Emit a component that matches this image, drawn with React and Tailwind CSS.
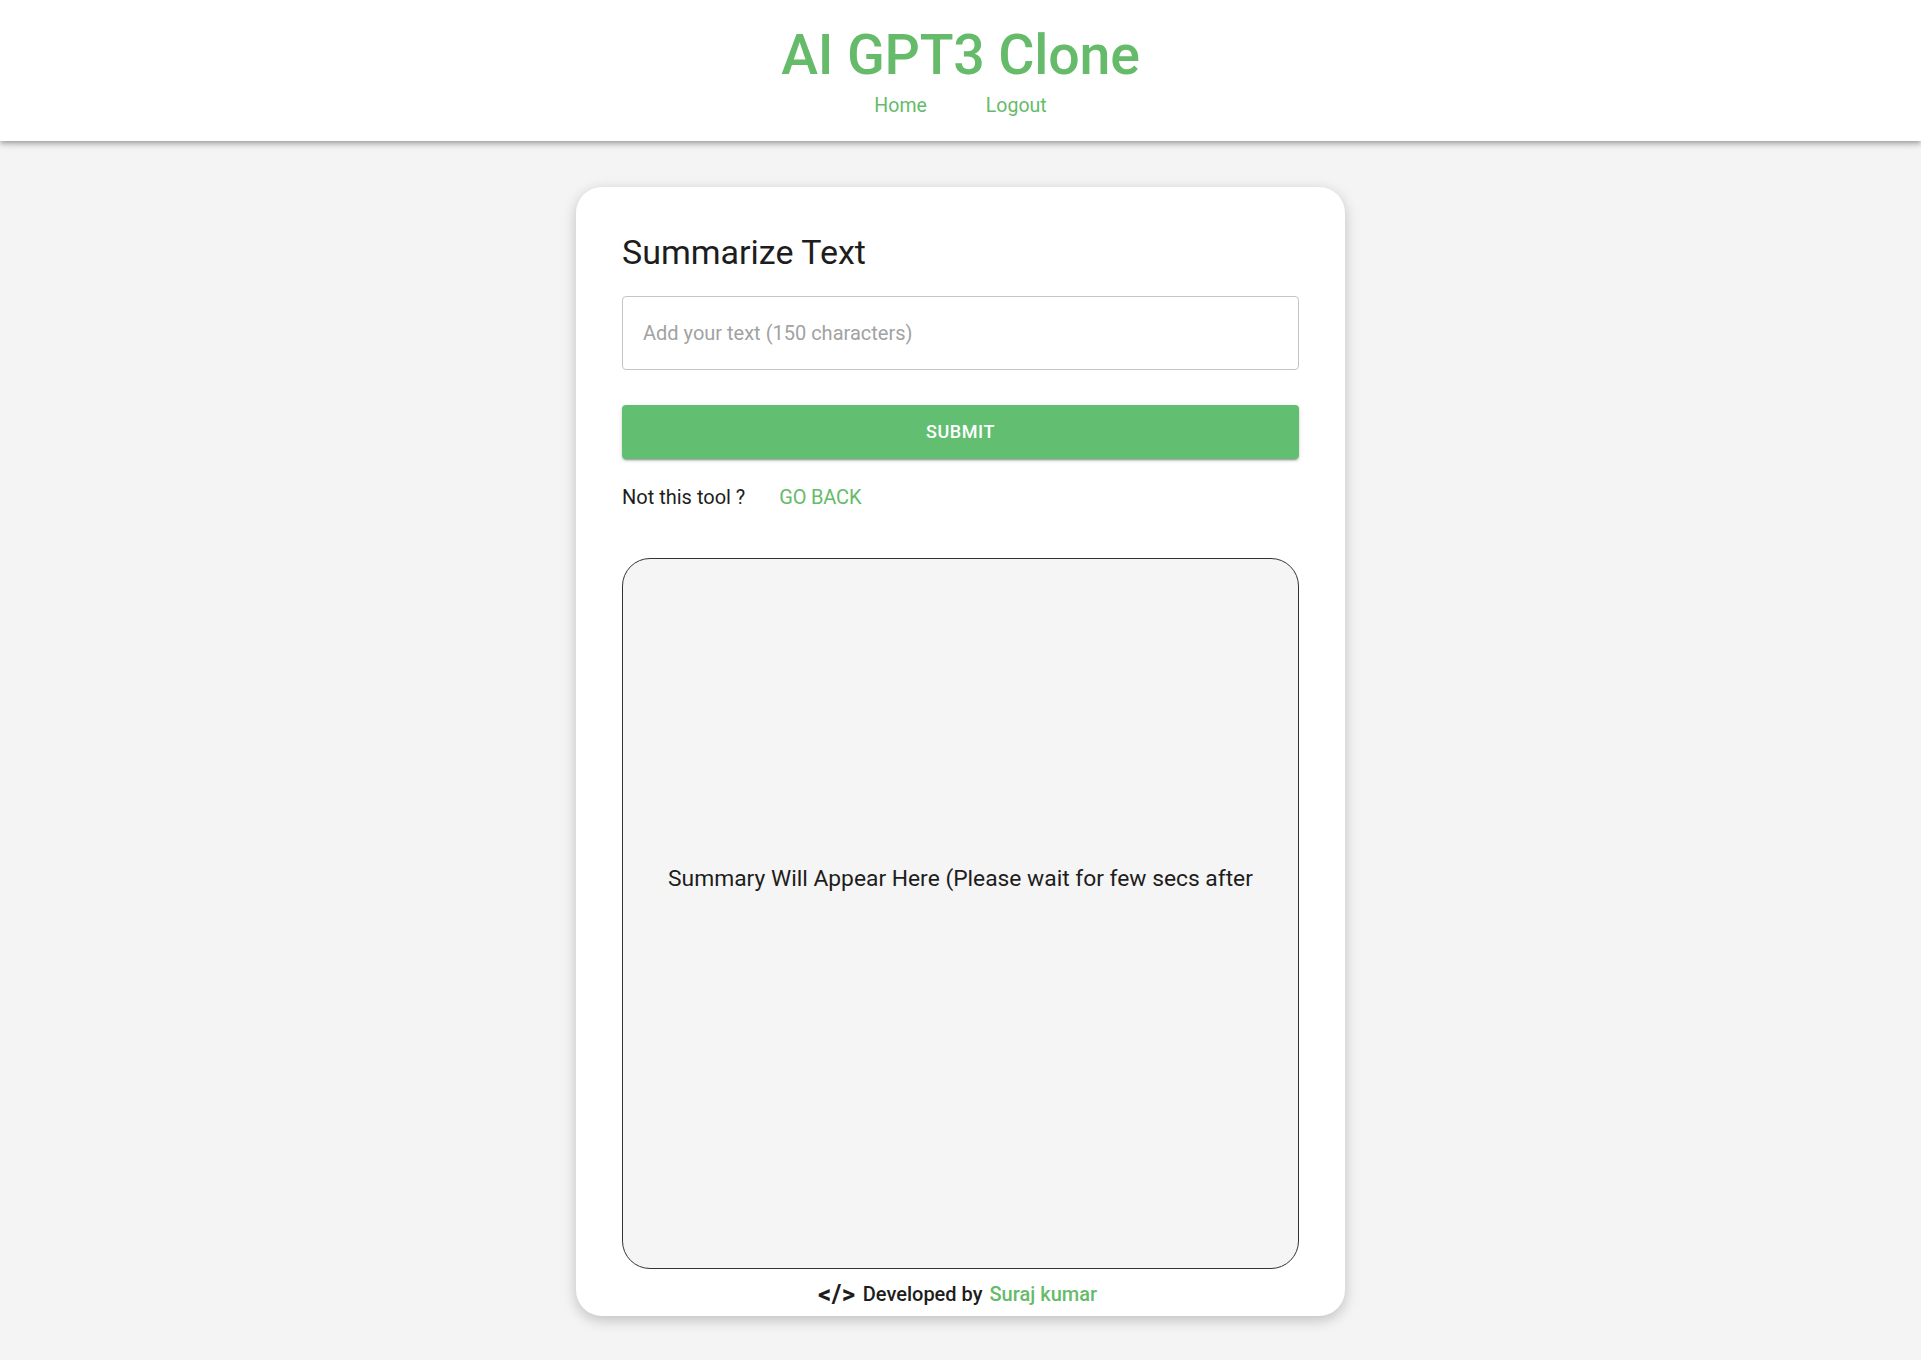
export default function App() {
  const font = { fontFamily: 'Roboto, "Noto Sans", sans-serif' };
  return (
    <div className="min-h-[1360px] bg-[#f4f4f4]" style={font}>
      <header className="h-[141px] bg-white shadow-[0_2px_4px_-1px_rgba(0,0,0,0.2),0_4px_5px_0_rgba(0,0,0,0.14),0_1px_10px_0_rgba(0,0,0,0.12)] flex flex-col items-center relative z-10">
        <h1 className="mt-[23px] text-[55.5px] leading-[66px] font-medium tracking-[-0.2px] text-[#66bb6a]">AI GPT3 Clone</h1>
        <nav className="flex gap-[59px] text-[19.5px] leading-[24px] text-[#66bb6a] mt-[5px]">
          <a>Home</a>
          <a>Logout</a>
        </nav>
      </header>
      <main className="flex justify-center pt-[46px]">
        <div className="w-[769px] h-[1129px] bg-white rounded-[26px] shadow-[0_4px_14px_rgba(0,0,0,0.22)] px-[46px] pt-[45px] flex flex-col">
          <h2 className="text-[34px] leading-[40px] text-[#1d1d1d]">Summarize Text</h2>
          <div className="mt-[24px] h-[74px] border border-[#c4c4c4] rounded-[4px] flex items-center px-[20px]">
            <span className="text-[20px] text-[#a2a2a2]">Add your text (150 characters)</span>
          </div>
          <button className="mt-[35px] h-[54px] rounded-[4px] bg-[#62bf72] text-white text-[18px] leading-[22px] font-medium tracking-[0.6px] uppercase shadow-[0_3px_1px_-2px_rgba(0,0,0,0.2),0_2px_2px_0_rgba(0,0,0,0.14),0_1px_5px_0_rgba(0,0,0,0.12)]">
            Submit
          </button>
          <div className="mt-[24px] flex items-center text-[20px] leading-[28px]">
            <span className="text-[#1d1d1d]">Not this tool ?</span>
            <span className="ml-[34px] text-[#66bb6a] uppercase tracking-[-0.2px]">Go Back</span>
          </div>
          <div className="mt-[47px] h-[711px] border border-[#333] rounded-[28px] bg-[#f5f5f5] pt-[304px] text-center">
            <p className="text-[22.8px] leading-[32px] text-[#1d1d1d]">Summary Will Appear Here (Please wait for few secs after</p>
          </div>
          <div className="mt-[11px] pr-[6px] flex justify-center items-center text-[20px] leading-[28px] font-medium">
            <span className="text-[26px] leading-[28px] font-bold text-[#1d1d1d] mr-[7px] tracking-[0.5px]">&lt;/&gt;</span>
            <span className="text-[#1d1d1d]">Developed by</span>
            <span className="ml-[7px] text-[#66bb6a]">Suraj kumar</span>
          </div>
        </div>
      </main>
    </div>
  );
}
